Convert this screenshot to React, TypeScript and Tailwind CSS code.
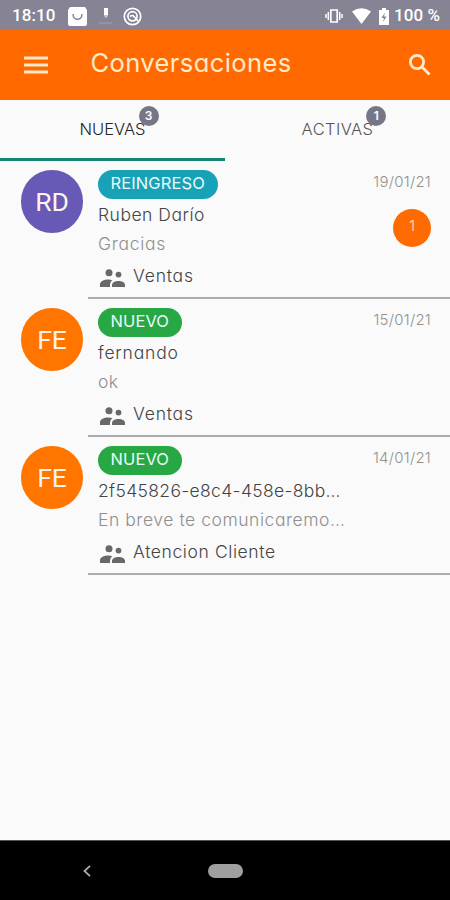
import React from "react";

type Conversation = {
  initials: string;
  avatar: string;
  tag: string;
  tagStyle: string;
  name: string;
  nameStyle: string;
  preview: string;
  previewStyle: string;
  team: string;
  teamStyle: string;
  date: string;
  unread?: number;
};

const conversations: Conversation[] = [
  {
    initials: "RD",
    avatar: "bg-[#6759b6]",
    tag: "REINGRESO",
    tagStyle: "w-[120px] bg-[#17a2b8] tracking-[0.1px]",
    name: "Ruben Darío",
    nameStyle: "tracking-[0.5px]",
    preview: "Gracias",
    previewStyle: "tracking-[0.7px]",
    team: "Ventas",
    teamStyle: "tracking-[0.8px]",
    date: "19/01/21",
    unread: 1,
  },
  {
    initials: "FE",
    avatar: "bg-[#ff7500]",
    tag: "NUEVO",
    tagStyle: "w-[84px] bg-[#28a745] tracking-[0.1px]",
    name: "fernando",
    nameStyle: "tracking-[0.8px]",
    preview: "ok",
    previewStyle: "tracking-[0.5px]",
    team: "Ventas",
    teamStyle: "tracking-[0.8px]",
    date: "15/01/21",
  },
  {
    initials: "FE",
    avatar: "bg-[#ff7500]",
    tag: "NUEVO",
    tagStyle: "w-[84px] bg-[#28a745] tracking-[0.1px]",
    name: "2f545826-e8c4-458e-8bb…",
    nameStyle: "tracking-[0.35px]",
    preview: "En breve te comunicaremo…",
    previewStyle: "tracking-[0.55px]",
    team: "Atencion Cliente",
    teamStyle: "tracking-[0.6px]",
    date: "14/01/21",
  },
];

function StatusBar() {
  return (
    <div className="flex h-[30px] items-center bg-[#858394] pl-[12px] pr-[9px] pt-[2px] font-['Roboto',sans-serif] text-[17px] font-medium text-white">
      <span className="w-[56px] tracking-[0.1px]">18:10</span>
      <svg className="h-[19px] w-[19px]" viewBox="0 0 19 19">
        <path d="M2 0h15l2 3v14q0 2-2 2H2q-2 0-2-2V3z" fill="#fff" />
        <path d="M5 7c0 7 9 7 9 0" fill="none" stroke="#858394" strokeWidth="1.5" />
      </svg>
      <svg className="ml-[12px] h-[19px] w-[13px]" viewBox="0 0 13 19">
        <path d="M5 1h4v7H5z" fill="#fff" />
        <path d="M4.500 8h5L7 11.500z" fill="#c4c3cc" />
        <path d="M0 16h13" stroke="#9a98a7" strokeWidth="1.5" />
      </svg>
      <svg className="ml-[11px] h-[19px] w-[19px]" viewBox="0 0 19 19" fill="none" stroke="#fff">
        <circle cx="9.5" cy="9.5" r="8.2" strokeWidth="1.7" />
        <circle cx="9.5" cy="9.3" r="4.6" strokeWidth="1.7" />
        <path d="M7 9.500q2.500-2 4 0L15 14" strokeWidth="1.7" />
      </svg>
      <div className="flex-1" />
      <svg className="h-[16px] w-[18px]" viewBox="0 0 18 16" fill="none" stroke="#fff">
        <path d="M5.8 2h6.4v12H5.8z" strokeWidth="1.7" />
        <path d="M3.3 4v8M14.7 4v8M1 6v4M17 6v4" strokeWidth="1.5" />
      </svg>
      <svg className="ml-[9px] h-[16px] w-[19px]" viewBox="0 0 19 16">
        <path d="M0 3.5Q9.500-3 19 3.500L9.500 16z" fill="#fff" />
      </svg>
      <svg className="ml-[8px] h-[17px] w-[10px]" viewBox="0 0 10 17">
        <path d="M3 0h4v2h3v15H0V2h3z" fill="#fff" />
        <path d="M6 4.500 2.500 10H5l-1 4 3.500-5.500H5z" fill="#858394" />
      </svg>
      <span className="ml-[5px] w-[47px] whitespace-nowrap tracking-[0.1px]">100 %</span>
    </div>
  );
}

function TeamIcon() {
  return (
    <svg className="mt-[9px] h-[18px] w-[25px]" viewBox="0 0 25 18" fill="#686868">
      <circle cx="9" cy="3.700" r="3.500" />
      <circle cx="18.500" cy="5.600" r="2.900" />
      <path d="M0 18v-2.500C0 11.500 7 9.500 12.500 11.200 10.500 12.500 10 14 10 18z" />
      <path d="M12 18v-2c0-5.500 13-5.500 13 0v2z" />
    </svg>
  );
}

function Row({ item }: { item: Conversation }) {
  return (
    <article className="flex h-[138px] pl-[21px]">
      <div className={`mt-[9px] flex h-[63px] w-[62px] shrink-0 items-center justify-center rounded-full pt-px font-['Roboto',sans-serif] text-[26.5px] text-[#fff3ec] ${item.avatar}`}>
        {item.initials}
      </div>
      <div className="ml-[5px] flex min-w-0 flex-1 border-b-2 border-[#acacac] pl-[10px] pr-[19px]">
        <div className="flex flex-1 flex-col items-start whitespace-nowrap text-[17.5px] font-light leading-[29px] text-[#444]">
          <div className={`mt-[9px] h-[29px] rounded-full pl-[12.5px] text-[16.5px] font-normal leading-[27px] text-[#e8fbfa] ${item.tagStyle}`}>
            {item.tag}
          </div>
          <div className={`mt-px h-[29px] ${item.nameStyle}`}>{item.name}</div>
          <div className={`h-[29px] text-[#8f8f8f] ${item.previewStyle}`}>{item.preview}</div>
          <div className="mt-[2px] flex h-[31px] pl-[2px] leading-[31px]">
            <TeamIcon />
            <span className={`ml-[8px] ${item.teamStyle}`}>{item.team}</span>
          </div>
        </div>
        <div className="flex w-[60px] flex-col items-end text-[#929292]">
          <span className="mt-[9px] whitespace-nowrap text-[15px] font-light leading-[24px] tracking-[0.25px]">{item.date}</span>
          {item.unread && (
            <span className="mt-[15px] flex h-[38px] w-[38px] justify-center rounded-full bg-[#ff6b00] text-[14px] font-normal leading-[34px] text-[#ffd6a8]">
              {item.unread}
            </span>
          )}
        </div>
      </div>
    </article>
  );
}

function Tab({ label, count, active }: { label: string; count: number; active?: boolean }) {
  return (
    <div className={`flex h-[61px] w-1/2 justify-center border-b-[3px] text-[16.500px] leading-[58px] ${active ? "border-[#128574] text-[#252525]" : "border-transparent tracking-[0.4px] text-[#555]"}`}>
      <span className="relative font-light">
        {label}
        <span className="absolute right-[-13px] top-[6px] flex h-[20px] w-[20px] items-center justify-center rounded-full bg-[#777687] text-[12px] font-semibold leading-none tracking-normal text-white">
          {count}
        </span>
      </span>
    </div>
  );
}

export default function App() {
  return (
    <main className="flex h-[900px] w-[450px] flex-col overflow-hidden bg-[#fafafa] font-['Inter','Liberation_Sans',sans-serif] [font-feature-settings:'cv11']">
      <StatusBar />
      <header className="flex h-[70px] items-center bg-[#ff6900] pl-[24px] pr-[19px] text-[#ffe9c9]">
        <svg className="h-[18px] w-[24px]" viewBox="0 0 24 18">
          <path d="M0 2h24M0 9h24M0 16h24" stroke="currentColor" strokeWidth="3" />
        </svg>
        <h1 className="mb-[5px] ml-[42.5px] flex-1 text-[25.5px] font-normal leading-[36px] tracking-[0.4px]">Conversaciones</h1>
        <svg className="h-[22px] w-[22px]" viewBox="0 0 22 22" fill="none" stroke="currentColor" strokeWidth="2.800">
          <circle cx="8" cy="8" r="6.600" />
          <path d="m13 13 7.500 7.500" />
        </svg>
      </header>
      <nav className="flex h-[61px]">
        <Tab label="NUEVAS" count={3} active />
        <Tab label="ACTIVAS" count={1} />
      </nav>
      <section className="flex-1">
        {conversations.map((item) => (
          <Row key={item.name} item={item} />
        ))}
      </section>
      <footer className="flex h-[60px] items-center border-t border-[#555] bg-black">
        <svg className="ml-[83px] h-[12px] w-[8px]" viewBox="0 0 8 12" fill="none" stroke="#aaa" strokeWidth="1.800">
          <path d="M7 .8 1.500 6 7 11.200" />
        </svg>
        <span className="ml-[117px] h-[14px] w-[35px] rounded-full bg-[#9f9f9f]" />
      </footer>
    </main>
  );
}
